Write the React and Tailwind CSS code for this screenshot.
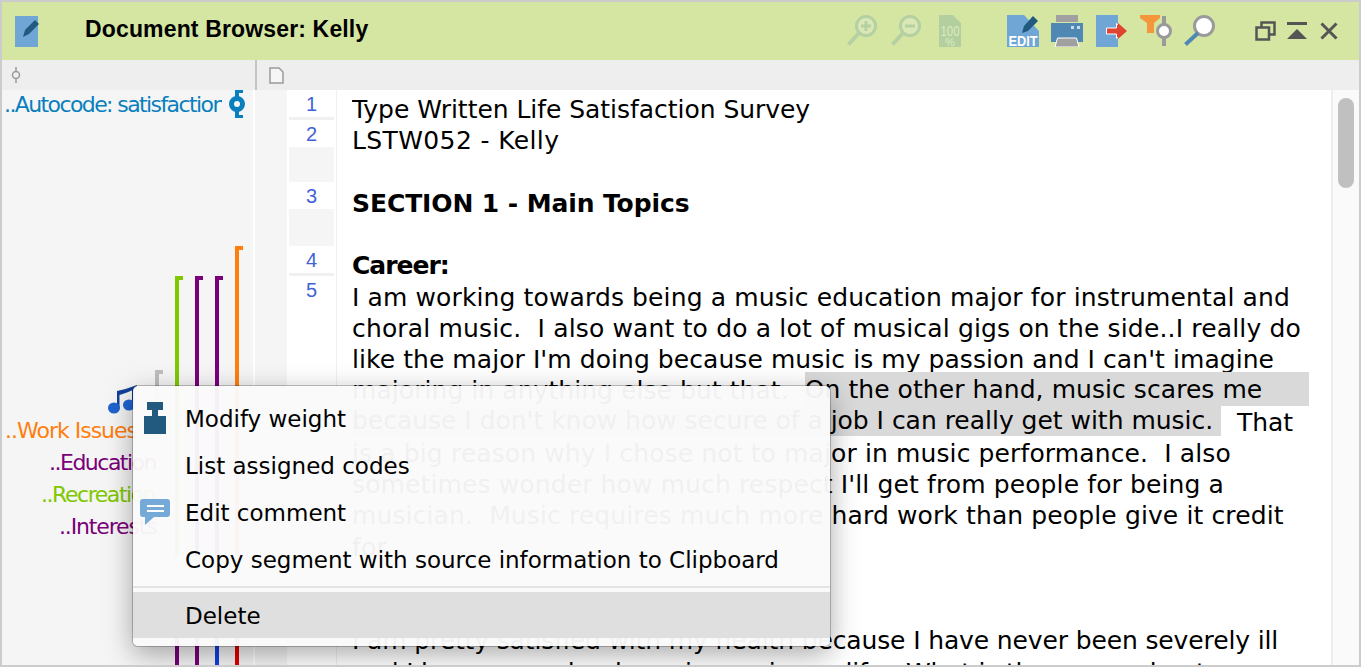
const mac = { fontFamily: '"DejaVu Sans", sans-serif' };

function NoteIcon() {
  return (
    <svg width="26" height="34" viewBox="0 0 26 34">
      <rect x="2" y="2" width="23" height="31" fill="#6fa6d6" />
      <path d="M10 23 L12 16 L22 6 L26 10 L16 20 Z" fill="#21597f" />
    </svg>
  );
}

function ZoomIcon({ sign }) {
  return (
    <svg width="30" height="32" viewBox="0 0 30 32" fill="none">
      <circle cx="19" cy="11" r="9.5" stroke="#b5d0a2" strokeWidth="3" fill="#d9e8b4" />
      <path d="M12 18 L1.5 29.5" stroke="#b5d0a2" strokeWidth="4" />
      <path d="M14 11 H24" stroke="#b5d0a2" strokeWidth="3" />
      {sign === 'plus' && <path d="M19 6 V16" stroke="#b5d0a2" strokeWidth="3" />}
    </svg>
  );
}

function HundredIcon() {
  return (
    <svg width="22" height="32" viewBox="0 0 22 32">
      <path d="M0 0 H14 L22 8 V32 H0 Z" fill="#b3cfa0" />
      <text x="11" y="21" textAnchor="middle" fontSize="15" textLength="19" lengthAdjust="spacingAndGlyphs" fill="#dcebbe" fontFamily="Liberation Sans">100</text>
      <text x="11" y="30.5" textAnchor="middle" fontSize="11" fill="#dcebbe" fontFamily="Liberation Sans">%</text>
    </svg>
  );
}

function EditIcon() {
  return (
    <svg width="32" height="32" viewBox="0 0 32 32">
      <path d="M0 0 H17 L32 16 V32 H0 Z" fill="#6fa6d6" />
      <path d="M15 18 L17 11 L26 1 L31 6 L21 16 Z" fill="#21597f" />
      <text x="16" y="30.5" textAnchor="middle" fontSize="15.5" fontWeight="bold" textLength="29" lengthAdjust="spacingAndGlyphs" fill="#fff" fontFamily="Liberation Sans">EDIT</text>
    </svg>
  );
}

function PrinterIcon() {
  return (
    <svg width="32" height="32" viewBox="0 0 32 32">
      <rect x="5" y="0" width="22" height="7" fill="#a0a0a0" />
      <rect x="0" y="8" width="32" height="19" fill="#5088b4" />
      <rect x="20" y="11" width="3" height="3" fill="#c8dcea" />
      <rect x="26" y="11" width="3" height="3" fill="#c8dcea" />
      <path d="M4 32 L6.5 23 H25.5 L28 32 Z" fill="#a0a0a0" stroke="#fff" strokeWidth="1" />
    </svg>
  );
}

function ExportIcon() {
  return (
    <svg width="31" height="32" viewBox="0 0 31 32">
      <rect x="0" y="0" width="22" height="32" fill="#6fa6d6" />
      <path d="M10.5 13 H20.5 V8.5 L30 16 L20.5 23.5 V19 H10.5 Z" fill="#e0432f" stroke="#fff" strokeWidth="1" />
      <path d="M22 8 L31 16 L22 24 Z" fill="#e0432f" />
    </svg>
  );
}

function FilterIcon() {
  return (
    <svg width="32" height="32" viewBox="0 0 32 32">
      <path d="M0 0 H20 V3 L14 8 V18 H7 V8 L0 3 Z" fill="#f5963c" />
      <rect x="22" y="1" width="4" height="30" fill="#9a9a9a" />
      <circle cx="24" cy="16" r="6.5" fill="#fff" stroke="#9a9a9a" strokeWidth="3" />
    </svg>
  );
}

function SearchIcon() {
  return (
    <svg width="31" height="32" viewBox="0 0 31 32" fill="none">
      <circle cx="20" cy="11" r="9.5" fill="#fff" stroke="#9a9a9a" strokeWidth="3" />
      <path d="M14 18 L1.5 29.5" stroke="#5088b4" strokeWidth="4" />
    </svg>
  );
}

function CodeBar({ color, top, left, height, cap = true }) {
  return (
    <div className="absolute w-[4px]" style={{ background: color, top, left, height }}>
      {cap && <div className="absolute top-0 left-0 h-[4px] w-[8px]" style={{ background: color }} />}
    </div>
  );
}

function CodeLabel({ color, text, top, left, spacing }) {
  return (
    <div
      className="absolute text-[22px] leading-[26px] whitespace-nowrap"
      style={{ color, top, left, letterSpacing: spacing }}
    >
      {text}
    </div>
  );
}

function LeftPanel() {
  return (
    <div className="relative w-[253px] shrink-0 overflow-hidden border-r-2 border-white bg-[#f5f5f5]" style={mac}>
      <div className="absolute top-[2px] left-[2px] w-[218px] overflow-hidden text-[22px] leading-[26px] tracking-[-1.6px] whitespace-nowrap text-[#0a7fbd]">
        ..Autocode: satisfaction
      </div>
      <svg className="absolute top-0 left-[227px]" width="17" height="28" viewBox="0 0 17 28" fill="none">
        <path d="M6 1.5 H14 M6 26.5 H14" stroke="#0a7fbd" strokeWidth="3" />
        <path d="M8 1 V7 M8 21 V28" stroke="#0a7fbd" strokeWidth="4" />
        <circle cx="8" cy="14" r="5.5" stroke="#0a7fbd" strokeWidth="5" />
      </svg>

      <CodeBar color="#ff7f0e" top={156} left={233} height={310} />
      <CodeBar color="#7fc800" top={186} left={173} height={280} />
      <CodeBar color="#7a007a" top={186} left={193} height={280} />
      <CodeBar color="#7a007a" top={186} left={213} height={280} />
      <CodeBar color="#bdbdbd" top={280} left={153} height={60} />

      <CodeBar color="#7a007a" top={510} left={173} height={70} cap={false} />
      <CodeBar color="#7a007a" top={510} left={193} height={70} cap={false} />
      <CodeBar color="#1040e0" top={510} left={213} height={70} cap={false} />
      <CodeBar color="#e00000" top={510} left={233} height={70} cap={false} />

      <svg className="absolute top-[295px] left-[105px]" width="32" height="32" viewBox="0 0 32 32">
        <path d="M10 24 V6 Q20 4 30 0 V3 Q20 8 12.5 10 V24 Z" fill="#123f9c" />
        <path d="M25 5 H27.5 V21 H25 Z" fill="#123f9c" />
        <ellipse cx="7" cy="23" rx="6" ry="5.5" fill="#1f63cf" />
        <ellipse cx="22" cy="20" rx="6" ry="5.5" fill="#1f63cf" />
      </svg>

      <CodeLabel color="#ff7f0e" text="..Work Issues" top={328} left={3} spacing="-1px" />
      <CodeLabel color="#7a007a" text="..Education" top={360} left={47} spacing="-1.5px" />
      <CodeLabel color="#7fc800" text="..Recreation" top={392} left={39} spacing="-1.45px" />
      <CodeLabel color="#7a007a" text="..Interests" top={424} left={57} spacing="-1.15px" />
    </div>
  );
}

const rowClass = 'flex h-[27px] items-start justify-center bg-white pt-[3px] text-[20px] leading-[22px] text-[#3f63d6]';

function LineNumbers() {
  return (
    <div className="w-[50px] shrink-0 border-r border-[#f0f0f0] pr-[2px] pl-[2px]" style={{ fontFamily: '"Liberation Sans", sans-serif' }}>
      <div className={rowClass}>1</div>
      <div className="h-[3px] bg-[#f0f0f0]" />
      <div className={rowClass}>2</div>
      <div className="h-[35px] bg-[#f5f5f5]" />
      <div className={rowClass}>3</div>
      <div className="h-[37px] bg-[#f5f5f5]" />
      <div className={rowClass}>4</div>
      <div className="h-[3px] bg-[#f0f0f0]" />
      <div className={rowClass}>5</div>
    </div>
  );
}

function Line({ children, className = 'tracking-[0.12px]' }) {
  return (
    <div className={`h-[31.25px] leading-[31.25px] whitespace-pre ${className}`}>
      {children || ' '}
    </div>
  );
}

function DocText() {
  return (
    <div className="ml-[15px] flex-1 overflow-hidden pt-[4px] text-[25px] text-black" style={mac}>
      <Line className="tracking-[-0.04px]">Type Written Life Satisfaction Survey</Line>
      <Line className="tracking-[0.38px]">LSTW052 - Kelly</Line>
      <Line />
      <Line className="font-bold tracking-[-0.1px]">SECTION 1 - Main Topics</Line>
      <Line />
      <Line className="font-bold tracking-[-1px]">Career:</Line>
      <Line>I am working towards being a music education major for instrumental and</Line>
      <Line className="tracking-[0.16px]">choral music.  I also want to do a lot of musical gigs on the side..I really do</Line>
      <Line className="tracking-[0.065px]">like the major I'm doing because music is my passion and I can't imagine</Line>
      <Line className="tracking-[0.06px]">
        majoring in anything else but that.  <span className="-mt-[3px] inline-block bg-[#d9d9d9] pt-[2px] pr-[47px] align-top leading-[32px]">On the other hand, music scares me</span>
      </Line>
      <Line className="tracking-[-0.02px]">
        <span className="-mt-[0.5px] inline-block bg-[#d9d9d9] align-top leading-[30px]">because I don't know how secure of a job I can really get with music. </span>  That
      </Line>
      <Line>is a big reason why I chose not to major in music performance.  I also</Line>
      <Line>sometimes wonder how much respect I'll get from people for being a</Line>
      <Line>musician.  Music requires much more hard work than people give it credit</Line>
      <Line>for.</Line>
      <Line />
      <Line className="font-bold tracking-[-1px]">Health:</Line>
      <Line className="tracking-[-0.13px]">I am pretty satisfied with my health because I have never been severely ill</Line>
      <Line className="tracking-[-0.2px]">and I have no real or huge issues in my life.  What is the one such a to</Line>
    </div>
  );
}

function ContextMenu() {
  const item = 'flex h-[47px] items-center pl-[52px] text-[23px] text-black';
  return (
    <div
      className="absolute top-[384px] left-[131px] z-10 h-[260px] w-[697px] rounded-[5px] bg-[#fafafa]/96 shadow-[0_0_0_1px_rgba(0,0,0,0.22),0_8px_28px_rgba(0,0,0,0.35)]"
      style={mac}
    >
      <div className="pt-[10px]">
        <div className={`${item} relative`}>
          <svg className="absolute top-[6px] left-[11px]" width="22" height="32" viewBox="0 0 22 32">
            <rect x="3" y="0" width="16" height="8" fill="#21597f" />
            <rect x="8" y="8" width="6" height="6" fill="#21597f" />
            <rect x="0" y="14" width="22" height="18" fill="#21597f" />
          </svg>
          Modify weight
        </div>
        <div className={item}>List assigned codes</div>
        <div className={`${item} relative`}>
          <svg className="absolute top-[9px] left-[7px]" width="30" height="28" viewBox="0 0 30 28">
            <path d="M3 0 H27 Q30 0 30 3 V15 Q30 18 27 18 H14 L5 26 V18 H3 Q0 18 0 15 V3 Q0 0 3 0 Z" fill="#74a9d8" />
            <rect x="7" y="6" width="17" height="2" fill="#fff" />
            <rect x="7" y="11" width="17" height="2" fill="#fff" />
          </svg>
          Edit comment
        </div>
        <div className={item}>Copy segment with source information to Clipboard</div>
      </div>
      <div className="mt-[2px] h-[2px] bg-[#e4e4e4]" />
      <div className="mt-[4px] flex h-[46px] items-center bg-[#dfdfdf] pt-[2px] pl-[52px] text-[23px] text-black">Delete</div>
    </div>
  );
}

export default function App() {
  return (
    <div className="relative flex h-[667px] w-[1361px] flex-col overflow-hidden border-2 border-[#cccccc] bg-white">
      {/* title bar */}
      <div className="flex h-[58px] shrink-0 items-center bg-[#d4e6a2]">
        <div className="ml-[11px]"><NoteIcon /></div>
        <div className="ml-[46px] pb-[4px] text-[23px] font-bold tracking-[0.15px] text-black" style={{ fontFamily: '"Liberation Sans", sans-serif' }}>
          Document Browser: Kelly
        </div>
        <div className="ml-auto flex items-center">
          <ZoomIcon sign="plus" />
          <div className="ml-[14px]"><ZoomIcon sign="minus" /></div>
          <div className="ml-[18px]"><HundredIcon /></div>
          <div className="ml-[46px]"><EditIcon /></div>
          <div className="ml-[12px]"><PrinterIcon /></div>
          <div className="ml-[13px]"><ExportIcon /></div>
          <div className="ml-[13px]"><FilterIcon /></div>
          <div className="ml-[12px]"><SearchIcon /></div>
          <div className="mr-[21px] ml-[40px] flex items-center">
            <svg width="21" height="20" viewBox="0 0 21 20" fill="none" stroke="#555" strokeWidth="2.5">
              <path d="M6.5 6 V1.5 H19.5 V13.5 H14" />
              <rect x="1.5" y="6.5" width="12.5" height="12" />
            </svg>
            <svg className="ml-[11px]" width="20" height="18" viewBox="0 0 20 18">
              <rect x="0" y="0" width="20" height="3" fill="#555" />
              <path d="M0 17 L10 7 L20 17 Z" fill="#555" />
            </svg>
            <svg className="ml-[13px]" width="18" height="18" viewBox="0 0 18 18" stroke="#555" strokeWidth="3">
              <path d="M1.5 1.5 L16.5 16.5 M16.5 1.5 L1.5 16.5" />
            </svg>
          </div>
        </div>
      </div>

      {/* header strip */}
      <div className="flex h-[30px] shrink-0 bg-[#eeeeee]">
        <div className="flex w-[253px] items-center pl-[8px]">
          <svg width="12" height="18" viewBox="0 0 12 18" fill="none" stroke="#9a9a9a" strokeWidth="1.5">
            <circle cx="6" cy="9" r="3.5" />
            <path d="M6 1 V5 M6 13 V17" />
          </svg>
        </div>
        <div className="flex items-center border-l-2 border-[#c4c4c4] pl-[12px]">
          <svg width="15" height="17" viewBox="0 0 15 17" fill="#f6f6f6" stroke="#9a9a9a" strokeWidth="1.5">
            <path d="M1 1 H10 L14 5 V16 H1 Z" />
          </svg>
        </div>
      </div>

      {/* body */}
      <div className="flex min-h-0 flex-1">
        <LeftPanel />
        <div className="w-[32px] shrink-0 bg-[#f5f5f5]" />
        <div className="flex min-w-0 flex-1">
          <LineNumbers />
          <DocText />
        </div>
        <div className="relative w-[28px] shrink-0 border-l-2 border-[#eeeeee] bg-[#fafafa]">
          <div className="absolute top-[8px] left-[5px] h-[90px] w-[16px] rounded-full bg-[#c0c0c0]" />
        </div>
      </div>

      <ContextMenu />
    </div>
  );
}
